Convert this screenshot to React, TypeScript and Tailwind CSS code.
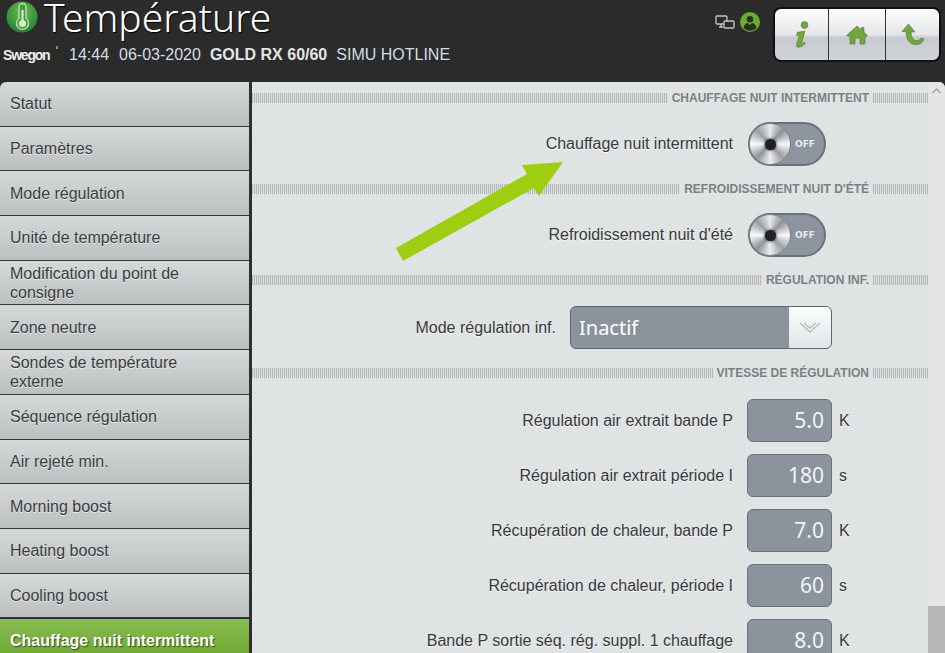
import { ReactNode } from "react";

const menu = [
  "Statut",
  "Paramètres",
  "Mode régulation",
  "Unité de température",
  "Modification du point de consigne",
  "Zone neutre",
  "Sondes de température externe",
  "Séquence régulation",
  "Air rejeté min.",
  "Morning boost",
  "Heating boost",
  "Cooling boost",
];

const speedRows = [
  { label: "Régulation air extrait bande P", value: "5.0", unit: "K" },
  { label: "Régulation air extrait période I", value: "180", unit: "s" },
  { label: "Récupération de chaleur, bande P", value: "7.0", unit: "K" },
  { label: "Récupération de chaleur, période I", value: "60", unit: "s" },
  { label: "Bande P sortie séq. rég. suppl. 1 chauffage", value: "8.0", unit: "K" },
];

function Stripes({ className }: { className: string }) {
  return (
    <div
      className={`h-[10px] bg-[repeating-linear-gradient(90deg,#b4b8b9_0_1px,#dcdfdf_1px_2px)] ${className}`}
    />
  );
}

function SectionTitle({ title, className }: { title: string; className: string }) {
  return (
    <div className={`flex items-center ${className}`}>
      <Stripes className="flex-1" />
      <span className="px-[4px] text-[12px] leading-[14px] font-bold text-[#7c8083] whitespace-nowrap">{title}</span>
      <Stripes className="w-[55px]" />
    </div>
  );
}

function Label({ children, className = "" }: { children: ReactNode; className?: string }) {
  return (
    <span className={`text-[16px] leading-[20px] text-[#37393b] whitespace-nowrap [text-shadow:0_1px_0_#f5f6f6] ${className}`}>
      {children}
    </span>
  );
}

function Toggle() {
  return (
    <div className="relative h-[44px] w-[78px] rounded-[22px] border-2 border-[#6a7079] bg-[#8c949e]">
      <span className="absolute left-[45px] top-[13px] text-[9px] leading-[14px] font-bold text-[#e9ebec] font-['DejaVu_Sans']">
        OFF
      </span>
      <div className="absolute left-[-1px] top-[-1px] flex h-[42px] w-[42px] items-center justify-center rounded-full border border-[#7d838b] bg-[conic-gradient(#e8e9ea,#8f9398_12%,#f7f7f7_25%,#9a9ea3_38%,#eeeeee_50%,#8f9398_62%,#fafafa_75%,#9a9ea3_88%,#e8e9ea)]">
        <div className="h-[11px] w-[11px] rounded-full bg-[#222] shadow-[0_0_3px_#000]" />
      </div>
    </div>
  );
}

function ToggleRow({ label, className }: { label: string; className: string }) {
  return (
    <div className={`flex items-center ${className}`}>
      <div className="w-[481px] text-right">
        <Label>{label}</Label>
      </div>
      <div className="ml-[15px]">
        <Toggle />
      </div>
    </div>
  );
}

function NumberRow({ label, value, unit }: { label: string; value: string; unit: string }) {
  return (
    <div className="flex h-[43px] shrink-0 items-center">
      <div className="w-[481px] text-right">
        <Label>{label}</Label>
      </div>
      <div className="ml-[14px] flex h-[43px] w-[85px] items-center justify-end rounded-[6px] border border-[#69707a] bg-[#8b939d] pr-[7px] font-['Noto_Sans',sans-serif] text-[21px] text-[#f2f4f5]">
        {value}
      </div>
      <Label className="ml-[7px]">{unit}</Label>
    </div>
  );
}

function ThermometerLogo() {
  return (
    <svg width="32" height="34" viewBox="0 0 32 34" className="shrink-0">
      <defs>
        <radialGradient id="thermoBg" cx="50%" cy="35%" r="70%">
          <stop offset="0%" stopColor="#6fbf4f" />
          <stop offset="100%" stopColor="#1f7d33" />
        </radialGradient>
      </defs>
      <circle cx="16" cy="17" r="15.5" fill="url(#thermoBg)" />
      <path
        d="M13 7a3.5 3.5 0 0 1 7 0v11.5a6 6 0 1 1-7 0z"
        fill="#3f9a45"
        stroke="#b9dfa8"
        strokeWidth="1.4"
      />
      <circle cx="16.5" cy="23.5" r="3.6" fill="#d7f0c4" />
      <rect x="15.4" y="10" width="2.2" height="12" fill="#d7f0c4" />
    </svg>
  );
}

function DevicesIcon() {
  return (
    <svg width="20" height="15" viewBox="0 0 20 15" fill="none" stroke="#c4c6c6" strokeWidth="1.3">
      <rect x="1" y="1" width="11" height="8" rx="1" />
      <path d="M4 12h4M6 9v3" />
      <rect x="9" y="6" width="10" height="7" rx="1" fill="#2b2b2b" />
    </svg>
  );
}

function PersonIcon() {
  return (
    <svg width="20" height="20" viewBox="0 0 20 20">
      <circle cx="10" cy="10" r="10" fill="#6cab2e" />
      <circle cx="10" cy="7.2" r="3.2" fill="#26331c" />
      <path d="M3.5 16c.6-3.6 3-5 4.6-5l1.9 2 1.9-2c1.6 0 4 1.4 4.6 5a9 9 0 0 1-13 0z" fill="#26331c" />
    </svg>
  );
}

function ToolButton({ children, className }: { children: ReactNode; className: string }) {
  return <div className={`flex h-full items-center justify-center ${className}`}>{children}</div>;
}

export default function App() {
  return (
    <div className="flex h-[653px] w-[945px] flex-col overflow-hidden bg-[#2b2b2b] font-['Liberation_Sans',Arial,sans-serif]">
      <header className="flex h-[82px] shrink-0">
        <div className="w-[715px] pl-[6px]">
          <div className="flex h-[37px] items-start">
            <ThermometerLogo />
            <h1 className="ml-[6px] mt-[-9px] font-['Noto_Sans',sans-serif] text-[39px] leading-[52px] font-light text-white [text-shadow:1px_1px_1px_#000]">
              Température
            </h1>
          </div>
          <div className="ml-[-3px] mt-[6px] flex items-center text-[16px] leading-[24px] text-[#d3dde4]">
            <span className="relative w-[66px] text-[14px] font-black tracking-[-1.2px] text-[#f2f2f2]">
              Swegon
              <span className="absolute left-[53px] top-[3px] h-[3px] w-[2px] bg-[#6cab2e]" />
            </span>
            <span className="ml-0">14:44</span>
            <span className="ml-[10px]">06-03-2020</span>
            <span className="ml-[9px] font-bold text-[#e3e6e8]">GOLD RX 60/60</span>
            <span className="ml-[9px]">SIMU HOTLINE</span>
          </div>
        </div>
        <div className="flex h-[20px] items-center gap-[5px] mt-[12px]">
          <DevicesIcon />
          <PersonIcon />
        </div>
        <div className="ml-[13px] mt-[7px] flex h-[55px] w-[168px] rounded-[8px] border-2 border-[#111] bg-[linear-gradient(#fdfdfd,#e4e6e8_50%,#c7cbcf_56%,#d0d3d7)]">
          <ToolButton className="w-[54px] border-r border-[#333]">
            <svg width="16" height="28" viewBox="0 0 16 28">
              <circle cx="10.5" cy="4" r="3.4" fill="#71a83a" stroke="#5d6a4d" strokeWidth="0.6" />
              <path
                d="M3 11.5 11 10 7.8 21.5c-.3 1.2.8 1.2 2.8-.4l.8 1.1C8.800 25.800 4 27 2.800 25.800c-1-1 .1-3.500 2.600-11.500l-2.600.5z"
                fill="#71a83a"
                stroke="#5d6a4d"
                strokeWidth="0.6"
              />
            </svg>
          </ToolButton>
          <ToolButton className="w-[57px] border-r border-[#333]">
            <svg width="22" height="20" viewBox="0 0 22 20">
              <path
                d="M11 1 15.500 5V2.500h2.500V7.200l3.500 3.300-1.300 1.300-1.200-1V19h-5v-6h-5v6h-5v-8.500l-1.200 1.100L.5 10.500z"
                fill="#71a83a"
                stroke="#5d6a4d"
                strokeWidth="0.6"
              />
            </svg>
          </ToolButton>
          <ToolButton className="flex-1">
            <svg width="24" height="24" viewBox="0 0 24 24">
              <path
                d="M7.500 1 1 8.500 5 8.800C5.200 16 8 21.500 15 21.500c4 0 7-2 8-5.500l-2.800-1c-1 1.600-2.600 2.500-4.700 2.500-3.600 0-5.200-3.800-5.500-8.500L14 9z"
                fill="#71a83a"
                stroke="#5d6a4d"
                strokeWidth="0.6"
              />
            </svg>
          </ToolButton>
        </div>
      </header>

      <div className="flex min-h-0 flex-1">
        <nav className="w-[252px] shrink-0 overflow-hidden border-r-[3px] border-[#2f2f2f]">
          {menu.map((item, i) => (
            <div
              key={item}
              className={`flex h-[44.7px] items-center border-b border-[#35373a] bg-[linear-gradient(#d6d9da,#bcbfc0)] pl-[10px] text-[16px] leading-[19px] text-[#3b3d40] [text-shadow:0_1px_0_#e6e8e9] ${i === 0 ? "rounded-tl-[6px]" : ""}`}
            >
              <span className="w-[205px]">{item}</span>
            </div>
          ))}
          <div className="mt-[1px] flex h-[44px] items-center bg-[linear-gradient(#87bd50,#69a32c)] pl-[10px] text-[16px] font-bold text-white [text-shadow:1px_1px_1px_#2f4d12]">
            Chauffage nuit intermittent
          </div>
        </nav>

        <main className="relative flex min-w-0 flex-1 overflow-hidden rounded-tr-[6px] bg-[#e0e3e3]">
          <div className="w-[676px] shrink-0 pt-[9px]">
            <SectionTitle title="CHAUFFAGE NUIT INTERMITTENT" className="h-[14px]" />
            <ToggleRow label="Chauffage nuit intermittent" className="mt-[17px]" />
            <SectionTitle title="REFROIDISSEMENT NUIT D'ÉTÉ" className="mt-[16px] h-[14px]" />
            <ToggleRow label="Refroidissement nuit d'été" className="mt-[17px]" />
            <SectionTitle title="RÉGULATION INF." className="mt-[16px] h-[14px]" />
            <div className="mt-[19px] flex h-[43px] items-center">
              <div className="w-[304px] text-right">
                <Label>Mode régulation inf.</Label>
              </div>
              <div className="ml-[14px] flex h-[43px] w-[262px] overflow-hidden rounded-[6px] border border-[#5f666f] bg-[#8b939d]">
                <span className="flex-1 pl-[8px] font-['Noto_Sans',sans-serif] text-[20px] leading-[41px] text-white">
                  Inactif
                </span>
                <div className="flex w-[42px] items-center justify-center bg-[linear-gradient(#fbfdfd,#dfe5e5)]">
                  <svg width="22" height="14" viewBox="0 0 22 14" fill="none" stroke="#b9bdbd" strokeWidth="1.5">
                    <path d="M1 2 11 11 21 2" />
                    <path d="M5 2 11 7 17 2" />
                  </svg>
                </div>
              </div>
            </div>
            <SectionTitle title="VITESSE DE RÉGULATION" className="mt-[17px] h-[14px]" />
            <div className="mt-[19px] flex flex-col gap-[12px]">
              {speedRows.map((row) => (
                <NumberRow key={row.label} {...row} />
              ))}
            </div>
          </div>

          <div className="flex w-[17px] shrink-0 flex-col justify-between bg-[#e4e5e5]">
            <svg width="17" height="17" viewBox="0 0 17 17" fill="none" stroke="#9a9a9a" strokeWidth="1.2" className="mt-[1px]">
              <path d="M4.500 10 8.500 6l4 4" />
            </svg>
            <div className="h-[47px] bg-[#b8b8b8]" />
          </div>

          {/* arrow added on top of the screen */}
          <svg width="175" height="105" viewBox="0 0 175 105" className="absolute left-[144px] top-[79px]">
            <path d="M167 1 126 4 131 13 0 87 7 100 138 27 143 35z" fill="#9dce12" />
          </svg>
        </main>
      </div>
    </div>
  );
}
